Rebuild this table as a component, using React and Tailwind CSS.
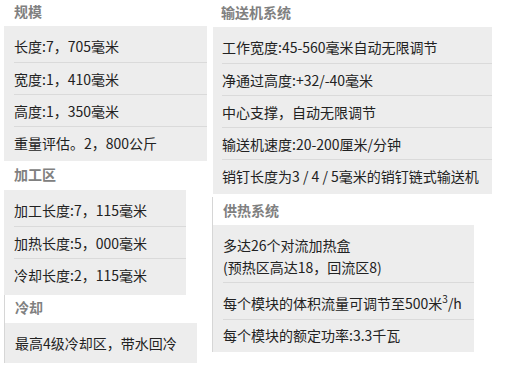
const FONT = "font-['Noto_Sans_CJK_SC','Noto_Sans',sans-serif]";

function Row({ first, children, className = "" }) {
  return (
    <li
      className={`ml-[10px] flex h-[32px] items-center leading-[22px] ${
        first ? "" : "border-t border-[#dadada]"
      } ${className}`}
    >
      {children}
    </li>
  );
}

function Header({ className, children }) {
  return (
    <h3 className={`pl-[10px] text-[14px] font-bold text-[#808080] ${className}`}>
      {children}
    </h3>
  );
}

const scale = ["长度:7，705毫米", "宽度:1，410毫米", "高度:1，350毫米", "重量评估。2，800公斤"];
const process = ["加工长度:7，115毫米", "加热长度:5，000毫米", "冷却长度:2，115毫米"];
const conveyor = [
  "工作宽度:45-560毫米自动无限调节",
  "净通过高度:+32/-40毫米",
  "中心支撑，自动无限调节",
  "输送机速度:20-200厘米/分钟",
  "销钉长度为3 / 4 / 5毫米的销钉链式输送机",
];

export default function App() {
  return (
    <div className={`${FONT} flex h-[373px] w-[509px] bg-white text-[14px] text-[#222]`}>
      {/* left column */}
      <div className="ml-[4px] flex w-[204px] flex-col">
        <Header className="h-[26px] leading-[22px]">规模</Header>
        <ul className="w-[203px] bg-[#ededed] pt-1 pb-[3px]">
          {scale.map((t, i) => (
            <Row key={t} first={i === 0}>{t}</Row>
          ))}
        </ul>

        <Header className="h-[29px] leading-[26px]">加工区</Header>
        <ul className="w-[182px] bg-[#ededed] pt-1 pb-[5px]">
          {process.map((t, i) => (
            <Row key={t} first={i === 0}>{t}</Row>
          ))}
        </ul>

        <section className="border-l border-[#d6d6d6]">
          <Header className="h-[28px] leading-[24px]">冷却</Header>
          <ul className="w-[192px] bg-[#ededed] py-1">
            <Row first>最高4级冷却区，带水回冷</Row>
          </ul>
        </section>
      </div>

      {/* right column */}
      <div className="ml-[4px] flex w-[280px] flex-col">
        <h3 className="h-[27px] pl-[9px] text-[14px] font-bold leading-[24px] text-[#808080]">
          输送机系统
        </h3>
        <ul className="ml-px w-[279px] bg-[#ededed] pt-1 pb-[3px] [&>li]:ml-[9px]">
          {conveyor.map((t, i) => (
            <Row key={t} first={i === 0}>{t}</Row>
          ))}
        </ul>

        <section className="mt-[3px] border-l border-[#d6d6d6]">
          <Header className="h-[28px] leading-[26px]">供热系统</Header>
          <ul className="w-[261px] bg-[#ededed] pt-1 pb-px">
            <li className="ml-[10px] pt-[5px] pb-[4px] leading-[22px]">
              多达26个对流加热盒
              <br />
              (预热区高达18，回流区8)
            </li>
            <li className="ml-[10px] border-t border-[#dadada] py-[5px] leading-[22px]">
              每个模块的体积流量可调节至500米<span className="align-super text-[10px]">3</span>/h
            </li>
            <Row>每个模块的额定功率:3.3千瓦</Row>
          </ul>
        </section>
      </div>
    </div>
  );
}
